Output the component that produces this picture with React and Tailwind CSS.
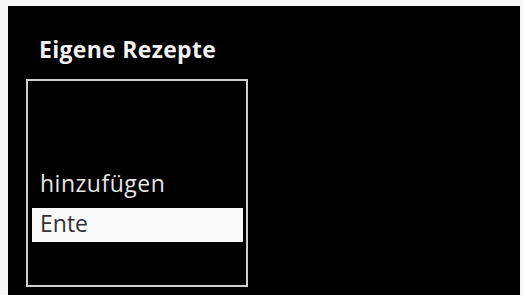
import React from "react";

function App() {
  return (
    <div className="h-[295px] w-[523px] overflow-hidden bg-[#f7f7f7] pl-[8px] pr-[3px] pt-[6px]" style={{ fontFamily: '"Open Sans", sans-serif' }}>
      <div className="flex h-[289px] flex-col bg-black">
        <h1 className="pl-[31px] pt-[29px] text-[23px] font-bold leading-[29px] tracking-[0.3px] text-[#f2f2f2]">
          Eigene Rezepte
        </h1>
        <div className="ml-[18px] mt-[15px] flex h-[208px] w-[222px] flex-col border-2 border-[#cfcfcf] px-[4px] pr-[3px]">
          <div className="mt-[87px] pl-[8px] text-[23px] leading-[30px] tracking-[0.5px] text-[#e6e6e6]">
            hinzufügen
          </div>
          <div className="mt-[10px] h-[34px] bg-[#fafafa] pl-[8px] text-[23px] leading-[31px] text-[#333333]">
            Ente
          </div>
        </div>
      </div>
    </div>
  );
}

export default App;
